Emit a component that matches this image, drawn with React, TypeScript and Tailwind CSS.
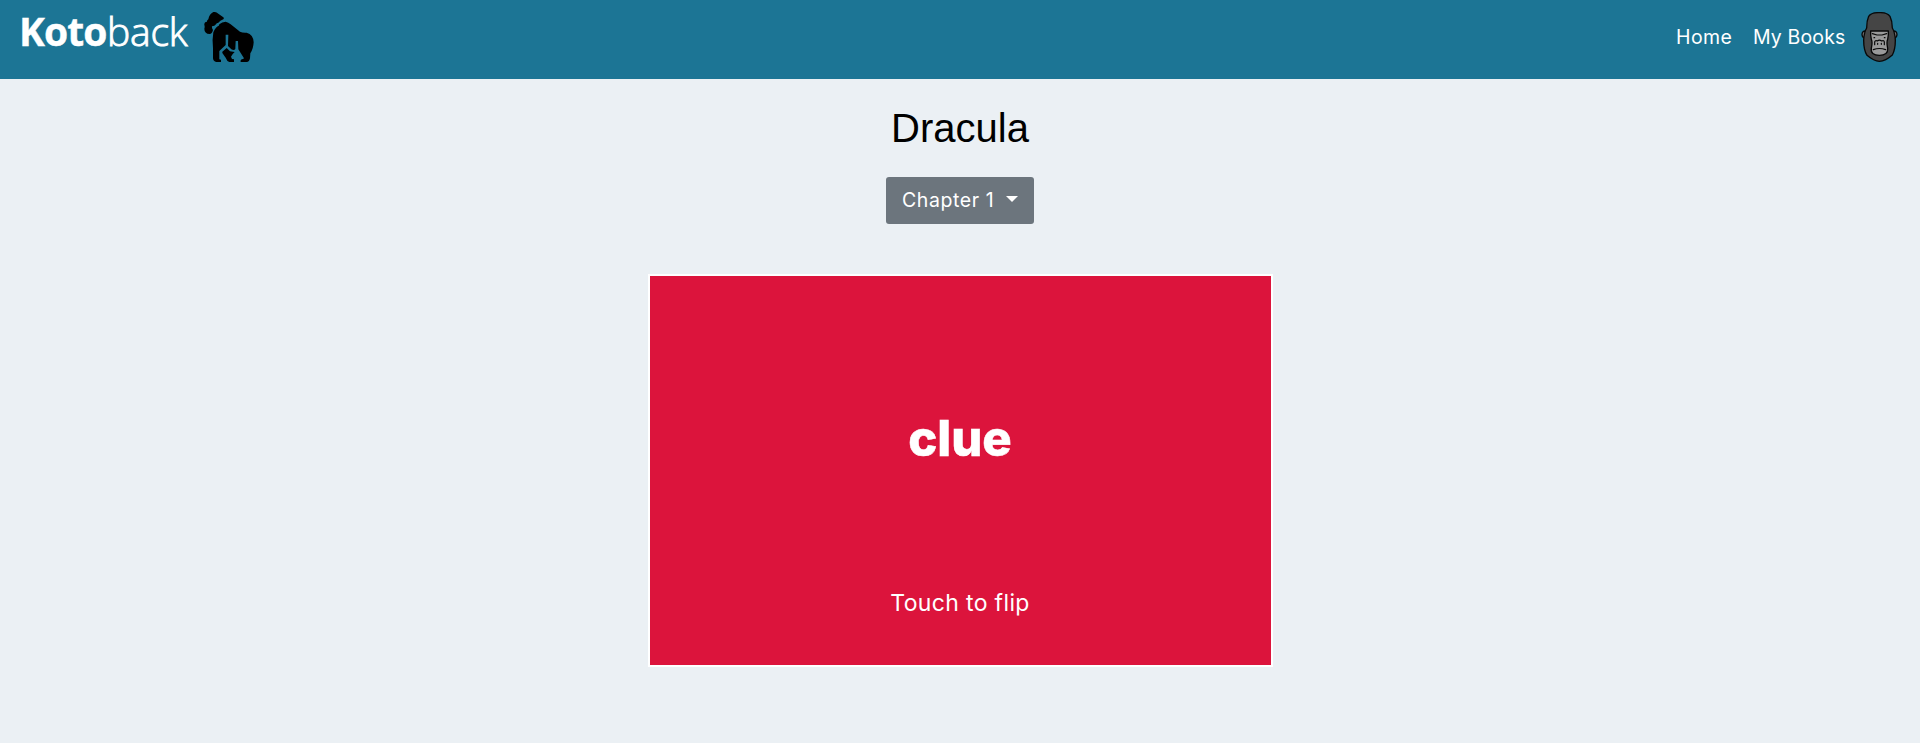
function GorillaLogo() {
  return (
    <svg className="mt-3 ml-[15px] h-[50px] w-[50px]" viewBox="0 0 150 150" aria-hidden="true">
      <path
        fill="#000"
        d="M28 0 Q36-1 43 5 L58 16 Q61 19 58 22 Q48 26 43 32 Q37 32 36 37 Q32 43 24 43 Q23 47 27 54 Q24 66 17 66 Q1 65 1 50 Q3 44 1 39 Q0 30 9 29 Q8 25 13 22 Q16 6 28 0Z"
      />
      <path
        fill="#000"
        d="M39 44 Q46 43 46 37 Q54 29 65 29 Q73 31 80 37 L108 59 Q116 63 128 62 Q148 67 149 91 Q148 111 139 124 L138 139 Q136 150 128 150 H110 Q108 142 117 141 L120 139 L103 112 L102 87 H95 L94 111 Q90 117 82 112 L72 102 L73 68 H65 V99 L46 117 V142 L51 143 V150 H37 Q28 149 27 139 V108 Q24 83 28 61 Q31 51 39 44Z"
      />
      <path
        fill="#000"
        d="M68 108 L78 118 L92 120 Q85 126 81 134 L84 141 L90 142 V150 H76 Q69 148 65 137 L55 123 V119Z"
      />
    </svg>
  );
}

function GorillaFace() {
  return (
    <svg className="mt-3 h-[50px] w-[37px]" viewBox="0 0 111 150" aria-hidden="true">
      <g stroke="#080808" strokeWidth="4" strokeLinejoin="round" strokeLinecap="round">
        <path fill="#777" d="M15 57 Q3 56 3 68 Q4 78 14 79Z M96 57 Q108 56 108 68 Q107 78 97 79Z" />
        <path
          fill="#454545"
          d="M55 2 Q31 1 23 13 Q17 27 17 48 Q9 61 8 85 Q8 115 18 130 Q39 148 55 148 Q74 147 94 129 Q103 113 103 85 Q102 61 94 48 Q94 27 87 13 Q78 1 55 2Z"
        />
        <path fill="#9a9a9a" d="M29 57 H82 Q83 69 80 82 Q76 90 80 109 Q82 130 55 130 Q28 130 31 109 Q35 90 31 82 Q28 69 29 57Z" />
        <path fill="none" strokeWidth="3.5" d="M34 65 L48 69 H63 L77 65 M39 77 H41 M70 77 H72 M41 98 V90 Q43 84 49 87 Q55 82 62 87 Q69 84 70 90 V98 M50 97 V94 M61 97 V94 M37 113 Q55 106 74 113" />
      </g>
    </svg>
  );
}

function Header() {
  return (
    <header className="flex h-[79px] items-start justify-between bg-[#1c7595] pr-[22px] pl-[19px] text-white">
      <a href="#" className="flex items-start">
        <span className="flex w-[170px] pt-1 font-['Open_Sans',sans-serif] text-[39px] leading-[54px] whitespace-nowrap">
          <b className="w-[88px] tracking-[-0.9px] [-webkit-text-stroke:0.4px_white]">Koto</b>
          <span className="font-light tracking-[-0.2px] [-webkit-text-stroke:0.9px_white]">back</span>
        </span>
        <GorillaLogo />
      </a>
      <nav className="flex items-start font-[Inter,sans-serif] text-[19.5px] leading-[74px]">
        <a href="#" className="w-[77px] tracking-[0.4px]">Home</a>
        <a href="#" className="w-[108px] tracking-[0.15px] whitespace-nowrap">My Books</a>
        <GorillaFace />
      </nav>
    </header>
  );
}

export default function App() {
  return (
    <div className="min-h-[743px] bg-[#ebf0f4]">
      <Header />
      <main className="flex flex-col items-center">
        <h1 className="mt-[25px] font-['Liberation_Sans',sans-serif] text-[40px] leading-[48px] text-black">Dracula</h1>
        <button className="mt-[25px] flex h-[47px] w-[148px] items-center rounded-[3px] bg-[#6c757d] pl-4 font-[Inter,sans-serif] text-[19.5px] text-white">
          <span className="w-[104px] text-left tracking-[0.6px] whitespace-nowrap">Chapter 1</span>
          <span className="mb-1 border-x-6 border-t-6 border-x-transparent border-t-white" />
        </button>
        <section className="mt-[50px] flex h-[393px] w-[625px] flex-col items-center border-2 border-white bg-[#dc143c] font-[Inter,sans-serif] text-white">
          <h2 className="mt-[133px] text-[49px] leading-[60px] font-extrabold [-webkit-text-stroke:0.5px_white]">clue</h2>
          <p className="mt-[117px] text-[23px] leading-[34px] tracking-[0.35px]">Touch to flip</p>
        </section>
      </main>
    </div>
  );
}
